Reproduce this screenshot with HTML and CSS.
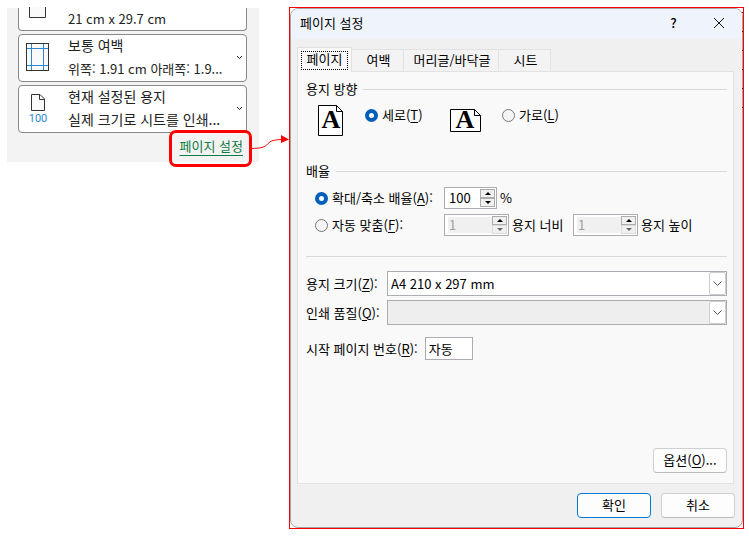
FILE: index.html
```
<!DOCTYPE html>
<html lang="ko">
<head>
    <meta charset="UTF-8">
    <meta name="viewport" content="width=device-width, initial-scale=1.0">
    <title>페이지 설정</title>
    <link rel="stylesheet" href="styles.css">
</head>
<body>
    <main class="page">
        <section class="printPanel">
            <button type="button" class="card cardCut">
                <svg class="cardIcon" width="24" height="22" viewBox="0 0 24 22"><path d="M4.500 0V10.500H20.500V0" fill="#fafafa" stroke="#333"/></svg>
                <span class="cardText"><span class="measure">21 cm x 29.7 cm</span></span>
            </button>
            <button type="button" class="card">
                <svg class="cardIcon" width="24" height="30" viewBox="0 0 24 30">
                    <rect x="1.500" y="1.500" width="22" height="27" fill="#fafafa"/>
                    <path d="M6.500 1V29M18.500 1V29M1 6.500H24M1 23.500H24" stroke="#2b88d0" fill="none"/>
                    <rect x="1.500" y="1.500" width="22" height="27" fill="none" stroke="#333"/>
                </svg>
                <span class="cardText"><span>보통 여백</span><span class="measure">위쪽: 1.91 cm 아래쪽: 1.9...</span></span>
                <svg class="arrow" width="7" height="5" viewBox="0 0 7 5"><path d="M1 1L3.500 3.500L6 1" fill="none" stroke="#222"/></svg>
            </button>
            <button type="button" class="card">
                <svg class="cardIcon" width="24" height="32" viewBox="0 0 24 32">
                    <path d="M6.500 2.500H15L19.500 7V18.500H6.500Z" fill="#fafafa" stroke="#333"/>
                    <path d="M14.500 2.500V7.500H19.500" fill="none" stroke="#333"/>
                    <text class="iconNumber" x="13" y="30" text-anchor="middle">100</text>
                </svg>
                <span class="cardText"><span>현재 설정된 용지</span><span>실제 크기로 시트를 인쇄...</span></span>
                <svg class="arrow" width="7" height="5" viewBox="0 0 7 5"><path d="M1 1L3.500 3.500L6 1" fill="none" stroke="#222"/></svg>
            </button>
            <a href="#dialog" class="setupLink">페이지 설정</a>
            <span class="highlight"></span>
            <svg class="pointer" width="40" height="20" viewBox="0 0 40 20">
                <path d="M0 14.500C26 14.500 10 6 32 5.500" fill="none" stroke="#f00"/>
                <path d="M31 1L39 5.500L31 9Z" fill="#f00"/>
            </svg>
        </section>

        <div class="frame">
            <form class="dialog" id="dialog">
                <header class="titleBar">
                    <h1>페이지 설정</h1>
                    <button type="button" class="titleButton" aria-label="도움말">?</button>
                    <button type="button" class="titleButton" aria-label="닫기">
                        <svg width="12" height="12" viewBox="0 0 12 12"><path d="M1 1L11 11M11 1L1 11" stroke="#111" fill="none"/></svg>
                    </button>
                </header>

                <nav class="tabs">
                    <button type="button" class="tab active"><span>페이지</span></button>
                    <button type="button" class="tab">여백</button>
                    <button type="button" class="tab tabWide">머리글/바닥글</button>
                    <button type="button" class="tab">시트</button>
                </nav>

                <div class="tabBody">
                    <h2 class="legend">용지 방향</h2>
                    <div class="orientation">
                        <svg class="paper" width="26" height="32" viewBox="0 0 26 32">
                            <path d="M.5 .5H18.500L24.500 6.500V30.500H.5Z" fill="#fff" stroke="#000"/>
                            <path d="M18.500 .5V6.500H24.500" fill="none" stroke="#000"/>
                            <text class="paperLetter" x="13" y="23" text-anchor="middle">A</text>
                        </svg>
                        <label class="choice"><input type="radio" name="orientation" checked><span>세로(<u>T</u>)</span></label>
                        <svg class="paper" width="31" height="32" viewBox="0 0 31 32">
                            <path d="M.5 4.500H24.500L30.500 10.500V26.500H.5Z" fill="#fff" stroke="#000"/>
                            <path d="M24.500 4.500V10.500H30.500" fill="none" stroke="#000"/>
                            <text class="paperLetter" x="15" y="23" text-anchor="middle">A</text>
                        </svg>
                        <label class="choice"><input type="radio" name="orientation"><span>가로(<u>L</u>)</span></label>
                    </div>

                    <h2 class="legend">배율</h2>
                    <div class="scaling">
                        <label class="choice"><input type="radio" name="scale" checked><span>확대/축소 배율(<u>A</u>):</span></label>
                        <div class="line">
                            <span class="spinner short">
                                <input type="text" id="percent" value="100">
                                <span class="steps">
                                    <button type="button" aria-label="올리기"><svg width="6" height="3" viewBox="0 0 6 3"><path d="M0 3L3 0L6 3Z"/></svg></button>
                                    <button type="button" aria-label="내리기"><svg width="6" height="3" viewBox="0 0 6 3"><path d="M0 0L3 3L6 0Z"/></svg></button>
                                </span>
                            </span>
                            <label for="percent">%</label>
                        </div>
                        <label class="choice"><input type="radio" name="scale"><span>자동 맞춤(<u>F</u>):</span></label>
                        <div class="line">
                            <span class="spinner">
                                <input type="text" id="pagesWide" value="1" disabled>
                                <span class="steps">
                                    <button type="button" aria-label="올리기"><svg width="6" height="3" viewBox="0 0 6 3"><path d="M0 3L3 0L6 3Z"/></svg></button>
                                    <button type="button" aria-label="내리기" disabled><svg width="6" height="3" viewBox="0 0 6 3"><path d="M0 0L3 3L6 0Z"/></svg></button>
                                </span>
                            </span>
                            <label for="pagesWide" class="wideLabel">용지 너비</label>
                            <span class="spinner">
                                <input type="text" id="pagesTall" value="1" disabled>
                                <span class="steps">
                                    <button type="button" aria-label="올리기"><svg width="6" height="3" viewBox="0 0 6 3"><path d="M0 3L3 0L6 3Z"/></svg></button>
                                    <button type="button" aria-label="내리기" disabled><svg width="6" height="3" viewBox="0 0 6 3"><path d="M0 0L3 3L6 0Z"/></svg></button>
                                </span>
                            </span>
                            <label for="pagesTall">용지 높이</label>
                        </div>
                    </div>

                    <hr>

                    <div class="fields">
                        <label for="paperSize">용지 크기(<u>Z</u>):</label>
                        <span class="combo">
                            <select id="paperSize"><option>A4 210 x 297 mm</option></select>
                            <span class="comboButton"><svg width="9" height="6" viewBox="0 0 9 6"><path d="M.5 .5L4.500 4.500L8.500 .5" fill="none" stroke="#555"/></svg></span>
                        </span>
                        <label for="quality">인쇄 품질(<u>Q</u>):</label>
                        <span class="combo">
                            <select id="quality" disabled></select>
                            <span class="comboButton"><svg width="9" height="6" viewBox="0 0 9 6"><path d="M.5 .5L4.500 4.500L8.500 .5" fill="none" stroke="#555"/></svg></span>
                        </span>
                    </div>
                    <div class="firstPage">
                        <label for="firstPage">시작 페이지 번호(<u>R</u>):</label>
                        <input type="text" id="firstPage" value="자동">
                    </div>
                    <button type="button" class="button optionsButton"><span>옵션(<u>O</u>)...</span></button>
                </div>

                <footer class="actions">
                    <button type="submit" class="button primary">확인</button>
                    <button type="button" class="button">취소</button>
                </footer>
            </form>
        </div>
    </main>
</body>
</html>
```
FILE: styles.css
```
* {
    box-sizing: border-box;
}
body {
    margin: 0;
    background: #fff;
    color: #000;
    font-family: "Noto Sans CJK KR", "Noto Sans", sans-serif;
    font-size: 13px;
    line-height: 20px;
}
button, input, select {
    margin: 0;
    padding: 0;
    color: inherit;
    font: inherit;
}
h1, h2 {
    margin: 0;
    font-size: 13px;
    font-weight: 400;
}
u {
    text-underline-offset: 2px;
}
svg {
    display: block;
    flex: none;
}
.page {
    display: grid;
    grid-template-columns: 252px 1fr;
    column-gap: 30px;
    align-items: start;
    padding: 7px 5px 7px 7px;
}

/* print settings on the left */
.printPanel {
    position: relative;
    display: flex;
    flex-direction: column;
    gap: 3px;
    margin-top: 1px;
    padding: 0 12px 6px 11px;
    background: #f3f3f3;
    color: #222;
}
.card {
    display: flex;
    align-items: center;
    height: 48px;
    padding: 0 3px 2px 6px;
    background: #fff;
    border: 1px solid #888;
    border-radius: 4px;
    font-size: 14px;
    line-height: 23px;
    text-align: left;
}
.cardCut {
    height: 23px;
    border-top: 0;
    border-radius: 0 0 4px 4px;
}
.cardIcon {
    margin-right: 19px;
}
.cardText {
    display: flex;
    flex: 1;
    flex-direction: column;
    white-space: nowrap;
}
.measure {
    font-size: 13px;
}
.iconNumber {
    fill: #2b88d0;
    font-family: Roboto, sans-serif;
    font-size: 11px;
}
.setupLink {
    align-self: flex-end;
    margin-right: 4px;
    color: #107c41;
    text-underline-offset: 4px;
}
.highlight {
    position: absolute;
    top: 122px;
    right: 7px;
    width: 83px;
    height: 37px;
    border: 3px solid #f00;
    border-radius: 7px;
}
.pointer {
    position: absolute;
    top: 126px;
    right: -31px;
}

/* dialog */
.frame {
    position: relative;
    border: 1px solid #f00;
}
.frame::after {
    position: absolute;
    top: 4px;
    right: 0;
    width: 1px;
    height: 97px;
    background: repeating-linear-gradient(#222 0 1px, transparent 1px 19px);
    content: "";
}
.dialog {
    overflow: hidden;
    background: #f0f0f0;
    border: 1px solid #a5a5a5;
    border-radius: 8px;
}
.titleBar {
    display: flex;
    align-items: center;
    height: 30px;
    padding: 0 1px 0 9px;
    background: #eff3fb;
}
.titleBar h1 {
    flex: 1;
    padding-bottom: 2px;
}
.titleButton {
    display: flex;
    align-items: center;
    justify-content: center;
    width: 45px;
    height: 30px;
    padding-bottom: 2px;
    background: none;
    border: 0;
    font-weight: 500;
}
.tabs {
    display: flex;
    align-items: flex-end;
    padding: 8px 6px 0;
}
.tab {
    width: 52px;
    height: 22px;
    padding: 0 0 2px 2px;
    background: #f3f3f3;
    border: 1px solid #e2e2e2;
    border-bottom: 0;
    border-left: 0;
    white-space: nowrap;
}
.tabWide {
    width: 95px;
}
.tab.active {
    position: relative;
    width: 55px;
    height: 25px;
    margin-bottom: -1px;
    padding: 3px;
    background: #f9f9f9;
    border-left: 1px solid #e2e2e2;
}
.tab.active span {
    display: block;
    height: 19px;
    border: 1px dotted #000;
    line-height: 14px;
}
.tabBody {
    display: flex;
    flex-direction: column;
    min-height: 413px;
    margin: 0 8px 0 6px;
    padding: 7px 6px 10px 8px;
    background: #f9f9f9;
    border: 1px solid #e2e2e2;
}
.legend {
    display: flex;
    align-items: center;
    gap: 6px;
}
.legend::after {
    flex: 1;
    height: 1px;
    background: #d9d9d9;
    content: "";
}
.orientation {
    display: flex;
    height: 62px;
    padding: 6px 0 0 12px;
}
.orientation .choice {
    width: 85px;
    height: 20px;
}
.paper {
    margin-right: 21px;
}
.paperLetter {
    font-family: "Liberation Serif", serif;
    font-size: 26px;
    font-weight: 700;
}
.choice {
    display: flex;
    align-items: center;
    gap: 4px;
    white-space: nowrap;
}
.choice input {
    width: 13px;
    height: 13px;
    appearance: none;
    background: #f5f5f5;
    border: 1px solid #777;
    border-radius: 50%;
}
.choice input:checked {
    background: #fff;
    border: 4px solid #005fb8;
}
.scaling {
    display: grid;
    grid-template-columns: 129px 1fr;
    row-gap: 5px;
    padding: 6px 0 0 9px;
}
.line {
    display: flex;
    align-items: center;
    gap: 3px;
}
.wideLabel {
    width: 58px;
}
.spinner {
    display: flex;
    width: 65px;
    height: 22px;
    padding: 1px;
    background: #fff;
    border: 1px solid #abadb3;
}
.spinner.short {
    width: 53px;
}
.spinner input {
    flex: 1;
    min-width: 0;
    padding-left: 3px;
    background: #fff;
    border: 0;
}
.spinner input:disabled {
    margin: 1px 0 1px 2px;
    padding-left: 1px;
    background: #f0f0f0;
    color: #a0a0a0;
    line-height: 16px;
}
.steps {
    display: flex;
    flex-direction: column;
    width: 15px;
}
.steps button {
    display: flex;
    flex: 1;
    align-items: center;
    justify-content: center;
    background: #f0f0f0;
    border: 1px solid #acacac;
}
.steps button:disabled {
    border-color: #dcdcdc;
    fill: #666;
}
hr {
    width: 100%;
    height: 1px;
    margin: 20px 0 14px;
    background: #d9d9d9;
    border: 0;
}
.fields {
    display: grid;
    grid-template-columns: 81px 1fr;
    row-gap: 4px;
    align-items: center;
}
.combo {
    position: relative;
    display: flex;
}
.combo select {
    width: 100%;
    height: 25px;
    padding: 0 20px 0 3px;
    appearance: none;
    background: #fff;
    border: 1px solid #abadb3;
    border-radius: 0;
}
.combo select:disabled {
    background: #eee;
    opacity: 1;
}
.comboButton {
    position: absolute;
    top: 1px;
    right: 1px;
    bottom: 1px;
    display: flex;
    align-items: center;
    justify-content: center;
    width: 17px;
    background: #fff;
    border: 1px solid #ccc;
    border-radius: 2px;
    pointer-events: none;
}
.firstPage {
    display: flex;
    align-items: center;
    gap: 7px;
    margin-top: 12px;
}
.firstPage input {
    width: 48px;
    height: 23px;
    padding: 0 3px;
    background: #fff;
    border: 1px solid #abadb3;
}
.button {
    width: 74px;
    height: 25px;
    padding-bottom: 2px;
    background: #fdfdfd;
    border: 1px solid #d0d0d0;
    border-bottom-color: #bbb;
    border-radius: 4px;
    line-height: 20px;
}
.primary {
    border-color: #0078d4;
}
.optionsButton {
    align-self: flex-end;
    margin-top: auto;
}
.actions {
    display: flex;
    justify-content: flex-end;
    gap: 10px;
    padding: 9px 7px;
}
```
